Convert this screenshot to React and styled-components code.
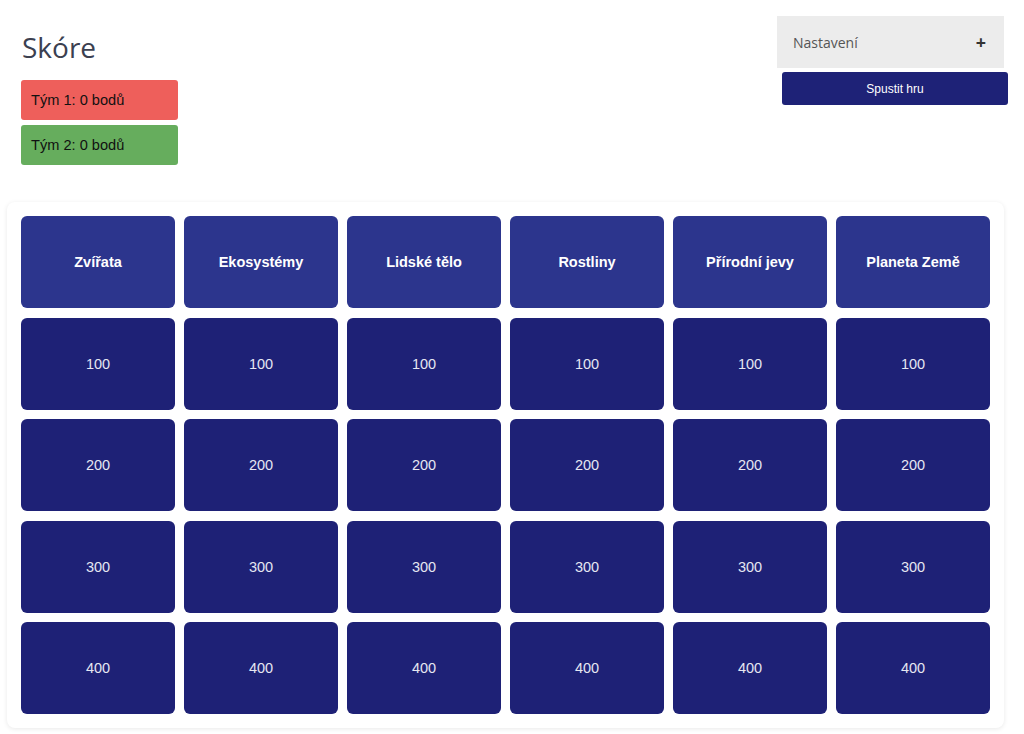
import styled, { createGlobalStyle } from 'styled-components';

const GlobalStyle = createGlobalStyle`
  html, body {
    margin: 0;
    padding: 0;
    background: #ffffff;
  }
  * { box-sizing: border-box; }
`;

const Page = styled.div`
  width: 1024px;
  min-height: 734px;
  padding: 16px 16px 0 7px;
  font-family: "Liberation Sans", Arial, sans-serif;
`;

const Top = styled.div`
  display: flex;
  justify-content: space-between;
  align-items: flex-start;
  height: 186px;
`;

const ScorePanel = styled.div`
  padding: 12px 0 0 14px;
  display: flex;
  flex-direction: column;
  gap: 5px;
`;

const Title = styled.h1`
  margin: 0 0 9px 1px;
  font-family: "Open Sans", "Noto Sans", sans-serif;
  font-weight: 400;
  font-size: 28px;
  line-height: 38px;
  color: #3b4050;
`;

const TeamBox = styled.div`
  width: 157px;
  height: 40px;
  border-radius: 3px;
  background: ${p => p.$color};
  display: flex;
  align-items: center;
  padding-left: 10px;
  font-size: 14.6px;
  color: #111;
`;

const SidePanel = styled.div`
  width: 231px;
  display: flex;
  flex-direction: column;
  gap: 4px;
`;

const Accordion = styled.div`
  width: 227px;
  height: 52px;
  background: #ececec;
  display: flex;
  align-items: center;
  justify-content: space-between;
  padding: 0 18px 0 16px;
  font-family: "Open Sans", "Noto Sans", sans-serif;
  font-size: 14px;
  color: #555;
`;

const Plus = styled.span`
  font-size: 18px;
  font-weight: 700;
  color: #333;
  line-height: 1;
`;

const StartButton = styled.button`
  margin-left: 5px;
  width: 226px;
  height: 33px;
  border: none;
  border-radius: 3px;
  background: #1e2277;
  color: #fff;
  font-family: "Liberation Sans", Arial, sans-serif;
  font-size: 12px;
  cursor: pointer;
`;

const Board = styled.div`
  width: 997px;
  background: #fff;
  border-radius: 8px;
  box-shadow: 0 1px 5px rgba(0, 0, 0, 0.09);
  padding: 14px;
  display: grid;
  grid-template-columns: repeat(6, 154px);
  grid-auto-rows: 92px;
  column-gap: 9px;
  row-gap: 9.5px;
`;

const Cell = styled.div`
  border-radius: 6px;
  background: ${p => (p.$header ? '#2c358d' : '#1e2176')};
  color: ${p => (p.$header ? '#ffffff' : '#e6e7f2')};
  font-weight: ${p => (p.$header ? 700 : 400)};
  font-size: 14.5px;
  display: flex;
  align-items: center;
  justify-content: center;
  text-align: center;
  cursor: pointer;
`;

const categories = ['Zvířata', 'Ekosystémy', 'Lidské tělo', 'Rostliny', 'Přírodní jevy', 'Planeta Země'];
const values = [100, 200, 300, 400];

export default function App() {
  return (
    <>
      <GlobalStyle />
      <Page>
        <Top>
          <ScorePanel>
            <Title>Skóre</Title>
            <TeamBox $color="#ee5f5b">Tým 1: 0 bodů</TeamBox>
            <TeamBox $color="#66ad5d">Tým 2: 0 bodů</TeamBox>
          </ScorePanel>
          <SidePanel>
            <Accordion>
              <span>Nastavení</span>
              <Plus>+</Plus>
            </Accordion>
            <StartButton>Spustit hru</StartButton>
          </SidePanel>
        </Top>
        <Board>
          {categories.map(c => (
            <Cell key={c} $header>{c}</Cell>
          ))}
          {values.map(v =>
            categories.map(c => <Cell key={c + v}>{v}</Cell>)
          )}
        </Board>
      </Page>
    </>
  );
}
